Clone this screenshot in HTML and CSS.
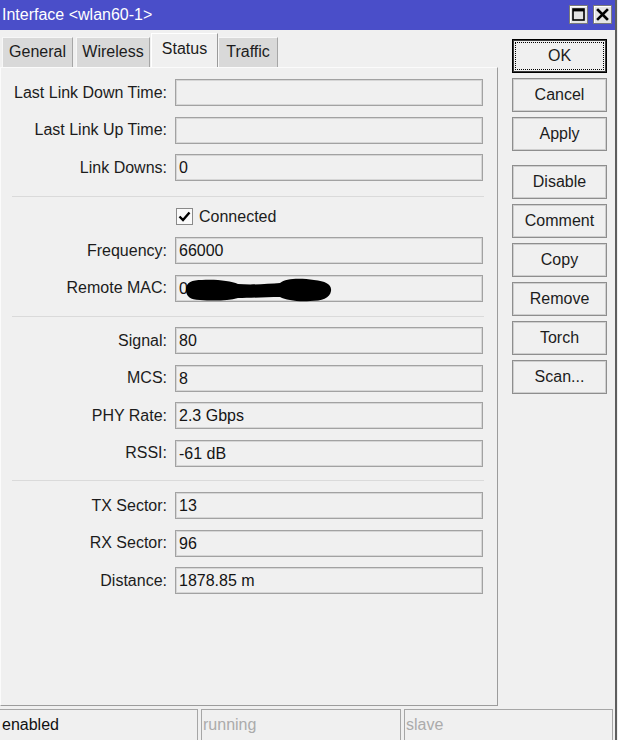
FILE: index.html
```html
<!DOCTYPE html>
<html>
<head>
<meta charset="utf-8">
<link rel="stylesheet" href="styles.css">
</head>
<body>
<div class="window">
  <div class="titlebar">
    <span class="title">Interface &lt;wlan60-1&gt;</span>
    <div class="tb-btns">
      <span class="tb-btn"><svg width="13" height="13" viewBox="0 0 13 13"><rect x="1" y="1" width="11" height="11" fill="none" stroke="#000" stroke-width="1.6"/><rect x="1" y="1" width="11" height="2.4" fill="#000"/></svg></span>
      <span class="tb-btn"><svg width="13" height="13" viewBox="0 0 13 13"><path d="M2 2 L11 11 M11 2 L2 11" stroke="#000" stroke-width="2.6" stroke-linecap="square"/></svg></span>
    </div>
  </div>
  <div class="main">
    <div class="left">
      <div class="tabs">
        <span class="tab t-general">General</span>
        <span class="tab t-wireless">Wireless</span>
        <span class="tab active t-status">Status</span>
        <span class="tab t-traffic">Traffic</span>
      </div>
      <div class="panel">
        <div class="grp g1">
          <div class="row"><span class="lbl">Last Link Down Time:</span><span class="field"></span></div>
          <div class="row"><span class="lbl">Last Link Up Time:</span><span class="field"></span></div>
          <div class="row"><span class="lbl">Link Downs:</span><span class="field">0</span></div>
        </div>
        <div class="sep s1"></div>
        <div class="row check-row">
          <span class="lbl"></span>
          <span class="check"><svg width="17" height="17" viewBox="0 0 17 17"><rect x="0.5" y="0.5" width="16" height="16" fill="#fafafa" stroke="#8a8a8a"/><path d="M3.5 8.5 L7 12 L13.5 4.5" fill="none" stroke="#000" stroke-width="2.4"/></svg></span>
          <span class="check-text">Connected</span>
        </div>
        <div class="grp g2">
          <div class="row"><span class="lbl">Frequency:</span><span class="field">66000</span></div>
          <div class="row"><span class="lbl">Remote MAC:</span><span class="field mac">0<svg class="blob" width="160" height="27" viewBox="0 0 160 27"><path d="M10 15 C10 7 16 5 26 5 C40 4 55 6 62 9 C75 10 92 9 104 8 C110 3 125 3 138 5 C150 6 156 10 155 16 C154 23 146 26 134 26 C122 27 110 25 104 22 C90 22 74 23 62 23 C52 26 36 26 24 25 C14 25 10 21 10 15 Z" fill="#000"/></svg></span></div>
        </div>
        <div class="sep s2"></div>
        <div class="grp g3">
          <div class="row"><span class="lbl">Signal:</span><span class="field">80</span></div>
          <div class="row"><span class="lbl">MCS:</span><span class="field">8</span></div>
          <div class="row"><span class="lbl">PHY Rate:</span><span class="field">2.3 Gbps</span></div>
          <div class="row"><span class="lbl">RSSI:</span><span class="field">-61 dB</span></div>
        </div>
        <div class="sep s3"></div>
        <div class="grp g4">
          <div class="row"><span class="lbl">TX Sector:</span><span class="field">13</span></div>
          <div class="row"><span class="lbl">RX Sector:</span><span class="field">96</span></div>
          <div class="row"><span class="lbl">Distance:</span><span class="field">1878.85 m</span></div>
        </div>
      </div>
    </div>
    <div class="buttons">
      <span class="btn ok">OK</span>
      <span class="btn">Cancel</span>
      <span class="btn">Apply</span>
      <span class="btn gap">Disable</span>
      <span class="btn">Comment</span>
      <span class="btn">Copy</span>
      <span class="btn">Remove</span>
      <span class="btn">Torch</span>
      <span class="btn">Scan...</span>
    </div>
  </div>
  <div class="statusbar">
    <span class="sec sec1">enabled</span>
    <span class="sec sec2 dim">running</span>
    <span class="sec sec3 dim">slave</span>
  </div>
</div>
</body>
</html>
```
FILE: styles.css
```css
html, body {
  margin: 0;
  padding: 0;
  background: #f0f0f0;
}
body {
  font-family: "Liberation Sans", Arial, sans-serif;
  font-size: 16px;
  color: #1c1c1c;
  overflow: hidden;
}
.window {
  width: 617px;
  height: 740px;
  box-sizing: border-box;
  border-right: 2px solid #5e5e5e;
  display: flex;
  flex-direction: column;
  overflow: hidden;
}
.titlebar {
  height: 30px;
  flex: none;
  background: #4a4ec9;
  color: #fff;
  display: flex;
  align-items: center;
  justify-content: space-between;
  padding-left: 2px;
}
.title {
  line-height: 30px;
}
.tb-btns {
  display: flex;
  gap: 5px;
  margin-right: 3px;
  align-self: flex-start;
  margin-top: 5px;
}
.tb-btn {
  width: 19px;
  height: 19px;
  box-sizing: border-box;
  background: #e4e4e4;
  border: 1px solid #7a7a7a;
  box-shadow: inset 1px 1px 0 #fff;
  display: flex;
  align-items: center;
  justify-content: center;
}
.main {
  flex: 1;
  display: flex;
  min-height: 0;
}
.left {
  width: 498px;
  flex: none;
  display: flex;
  flex-direction: column;
}
.tabs {
  height: 37px;
  box-sizing: border-box;
  padding-top: 3px;
  display: flex;
  align-items: flex-end;
}
.tab {
  height: 30px;
  box-sizing: border-box;
  background: #d9d9d9;
  border-top: 1px solid #f7f7f7;
  border-left: 1px solid #f7f7f7;
  border-right: 1px solid #a6a6a6;
  display: flex;
  align-items: center;
  justify-content: center;
  padding-bottom: 1px;
}
.tab.active {
  height: 34px;
  background: #f0f0f0;
  border-top: 1px solid #fff;
  border-left: 1px solid #fff;
  border-right: 1px solid #9a9a9a;
  padding-bottom: 4px;
}
.t-general { margin-left: 2px; width: 71px; }
.t-wireless { margin-left: 3px; width: 74px; }
.t-status { margin-left: 1px; width: 67px; }
.t-traffic { width: 60px; }
.panel {
  height: 639px;
  box-sizing: border-box;
  border-top: 1px solid #fbfbfb;
  border-left: 1px solid #fbfbfb;
  border-right: 1px solid #9c9c9c;
  border-bottom: 1px solid #9c9c9c;
  padding-top: 11px;
  display: flex;
  flex-direction: column;
}
.grp {
  display: flex;
  flex-direction: column;
  gap: 10.5px;
}
.row {
  height: 27px;
  display: flex;
  align-items: center;
}
.lbl {
  width: 166px;
  flex: none;
  text-align: right;
}
.field {
  position: relative;
  margin-left: 8px;
  width: 308px;
  height: 27px;
  box-sizing: border-box;
  border: 1px solid #a2a2a2;
  box-shadow: inset 0 0 0 1px #d6d6d6;
  background: #f0f0f0;
  padding-left: 3px;
  line-height: 25px;
  color: #141414;
}
.blob {
  position: absolute;
  left: 0;
  top: -1px;
}
.sep {
  height: 1px;
  background: #dadada;
  margin-left: 11px;
  width: 472px;
}
.s1 { margin-top: 15px; }
.check-row { margin-top: 6px; }
.check {
  margin-left: 9px;
  width: 17px;
  height: 17px;
  display: flex;
}
.check-text {
  margin-left: 6px;
}
.g2 { margin-top: 7px; }
.s2 { margin-top: 14.5px; }
.g3 { margin-top: 10px; }
.s3 { margin-top: 13.5px; }
.g4 { margin-top: 11px; }
.buttons {
  margin-left: 14px;
  padding-top: 9px;
  display: flex;
  flex-direction: column;
  gap: 5px;
}
.btn {
  width: 95px;
  height: 34px;
  box-sizing: border-box;
  border: 1px solid #8e8e8e;
  box-shadow: inset 0 0 0 1px #cfcfcf;
  background: #f0f0f0;
  display: flex;
  align-items: center;
  justify-content: center;
  padding-bottom: 1px;
}
.btn.ok {
  border: 1px solid #000;
  box-shadow: inset 0 0 0 1px #3a3a3a;
  outline: 1px dotted #000;
  outline-offset: -4px;
}
.btn.gap {
  margin-top: 9px;
}
.statusbar {
  height: 31px;
  flex: none;
  margin-top: 3px;
  display: flex;
  gap: 3px;
}
.sec {
  box-sizing: border-box;
  border-top: 1px solid #a6a6a6;
  border-left: 1px solid #a6a6a6;
  border-right: 1px solid #a6a6a6;
  line-height: 29px;
  padding-left: 1px;
  white-space: nowrap;
}
.sec1 {
  margin-left: -1px;
  width: 199px;
  padding-left: 2px;
  color: #111;
}
.sec2 { width: 200px; }
.sec3 { width: 209px; }
.dim { color: #ababab; }
```
